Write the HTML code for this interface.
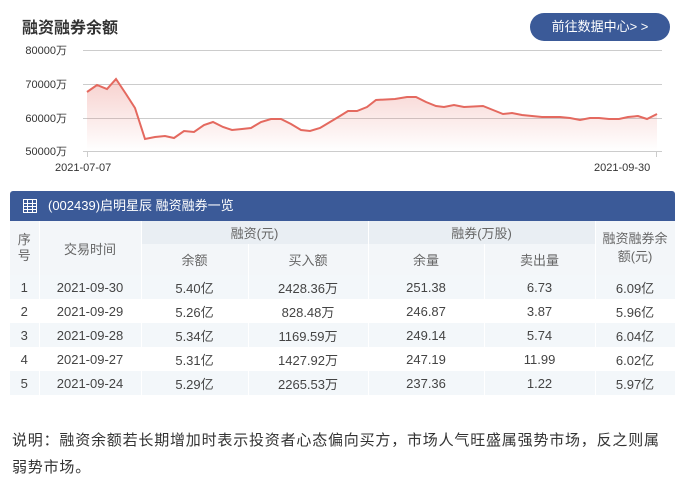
<!DOCTYPE html>
<html><head><meta charset="utf-8"><style>
body{margin:0;width:693px;height:486px;background:#fff;font-family:"Liberation Sans","Noto Sans CJK SC",sans-serif;color:#333;position:relative;overflow:hidden}
.title{position:absolute;left:22px;top:14px;font-size:16px;font-weight:bold;color:#333}
.btn{position:absolute;left:530px;top:13px;width:140px;height:28px;border-radius:14px;background:#3b5a98;color:#fff;font-size:13px;line-height:28px;text-align:center}
.tbl{position:absolute;left:10px;top:191px;width:665px}
.bar{height:30px;background:#3b5a98;color:#fff;font-size:13px;line-height:30px;border-radius:3px 3px 0 0;padding-left:38px;position:relative}
table{border-collapse:collapse;width:665px;font-size:13px;color:#444;table-layout:fixed}
td{text-align:center;padding:0;border-right:1px solid #fff}
.h td{background:#f3f6f9;color:#666}
.g{background:#e9eef3!important}
.r td{height:24px}
.odd td{background:#f3f7fa}
.note{position:absolute;left:12px;top:427px;width:662px;font-size:15px;letter-spacing:0.8px;line-height:27px;color:#333}
</style></head><body>
<div class="title">融资融券余额</div>
<div class="btn">前往数据中心&gt; &gt;</div>
<svg style="position:absolute;left:0;top:0" width="693" height="180">
<defs><linearGradient id="f" x1="0" y1="0" x2="0" y2="1"><stop offset="0" stop-color="#e87a72" stop-opacity=".35"/><stop offset="1" stop-color="#e87a72" stop-opacity="0"/></linearGradient></defs>
<g stroke="#ccc" stroke-width="1"><line x1="83" y1="50.5" x2="662" y2="50.5"/><line x1="83" y1="84.5" x2="662" y2="84.5"/><line x1="83" y1="118.5" x2="662" y2="118.5"/><line x1="83" y1="151.5" x2="662" y2="151.5"/><line x1="87.5" y1="151" x2="87.5" y2="157"/><line x1="656.5" y1="151" x2="656.5" y2="157"/></g>
<g font-size="11" fill="#333" font-family="Liberation Sans,Noto Sans CJK SC,sans-serif" text-anchor="end"><text x="67" y="54">80000万</text><text x="67" y="88">70000万</text><text x="67" y="122">60000万</text><text x="67" y="155">50000万</text></g>
<g font-size="11" fill="#333" font-family="Liberation Sans,sans-serif"><text x="55" y="171">2021-07-07</text><text x="594" y="171">2021-09-30</text></g>
<path d="M87,92 L97,85 107,89 116,79 126,94 135,108 145,139 155,137 165,136 174,138 184,131 194,132 204,125 213,122 223,127 232,130 242,129 251,128 261,122 271,119 281,119 291,124 301,130 310,131 320,128 330,122 340,116 348,111 357,111 367,107 376,100 395,99 407,97 416,97 426,102 436,106 444,107 454,105 464,107 483,106 493,110 503,114 512,113 522,115 532,116 542,117 560,117 570,118 580,120 590,118 599,118 609,119 619,119 628,117 638,116 647,119 657,114 L657,151 L87,151Z" fill="url(#f)"/>
<path d="M87,92 L97,85 107,89 116,79 126,94 135,108 145,139 155,137 165,136 174,138 184,131 194,132 204,125 213,122 223,127 232,130 242,129 251,128 261,122 271,119 281,119 291,124 301,130 310,131 320,128 330,122 340,116 348,111 357,111 367,107 376,100 395,99 407,97 416,97 426,102 436,106 444,107 454,105 464,107 483,106 493,110 503,114 512,113 522,115 532,116 542,117 560,117 570,118 580,120 590,118 599,118 609,119 619,119 628,117 638,116 647,119 657,114" fill="none" stroke="#e4695f" stroke-width="2"/>
</svg>
<div class="tbl">
<div class="bar"><svg style="position:absolute;left:13px;top:8px" width="14" height="14"><rect x="0.5" y="0.5" width="13" height="13" fill="none" stroke="#fff"/><g stroke="#fff"><line x1="0" y1="4.5" x2="14" y2="4.5"/><line x1="0" y1="7.5" x2="14" y2="7.5"/><line x1="0" y1="10.5" x2="14" y2="10.5"/><line x1="4.5" y1="0" x2="4.5" y2="14"/><line x1="9.5" y1="0" x2="9.5" y2="14"/></g></svg>(002439)启明星辰 融资融券一览</div>
<table>
<colgroup><col style="width:29px"><col style="width:102px"><col style="width:107px"><col style="width:120px"><col style="width:116px"><col style="width:111px"><col style="width:80px"></colgroup>
<tr class="h"><td rowspan="2" style="line-height:16px">序<br>号</td><td rowspan="2">交易时间</td><td colspan="2" class="g" style="height:23px">融资(元)</td><td colspan="2" class="g">融券(万股)</td><td rowspan="2" style="line-height:18px">融资融券余<br>额(元)</td></tr>
<tr class="h"><td style="height:31px">余额</td><td>买入额</td><td>余量</td><td>卖出量</td></tr>
<tr class="r odd"><td>1</td><td>2021-09-30</td><td>5.40亿</td><td>2428.36万</td><td>251.38</td><td>6.73</td><td>6.09亿</td></tr>
<tr class="r"><td>2</td><td>2021-09-29</td><td>5.26亿</td><td>828.48万</td><td>246.87</td><td>3.87</td><td>5.96亿</td></tr>
<tr class="r odd"><td>3</td><td>2021-09-28</td><td>5.34亿</td><td>1169.59万</td><td>249.14</td><td>5.74</td><td>6.04亿</td></tr>
<tr class="r"><td>4</td><td>2021-09-27</td><td>5.31亿</td><td>1427.92万</td><td>247.19</td><td>11.99</td><td>6.02亿</td></tr>
<tr class="r odd"><td>5</td><td>2021-09-24</td><td>5.29亿</td><td>2265.53万</td><td>237.36</td><td>1.22</td><td>5.97亿</td></tr>
</table></div>
<div class="note">说明：融资余额若长期增加时表示投资者心态偏向买方，市场人气旺盛属强势市场，反之则属弱势市场。</div>
</body></html>
